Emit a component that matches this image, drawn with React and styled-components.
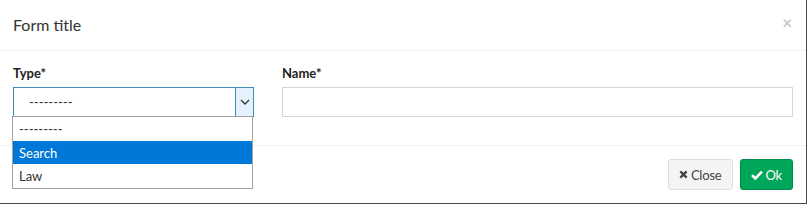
import React from "react";
import styled, { createGlobalStyle } from "styled-components";

const Global = createGlobalStyle`
  html, body { margin: 0; padding: 0; background: #4a4a4a; }
  body { font-family: Lato, "Noto Sans", sans-serif; color: #333; }
  * { box-sizing: border-box; }
`;

const Frame = styled.div`
  width: 807px;
  height: 204px;
  background: #4a4a4a;
  overflow: hidden;
`;

const Modal = styled.div`
  width: 806px;
  height: 203px;
  background: #fff;
  display: flex;
  flex-direction: column;
`;

const Header = styled.div`
  height: 51px;
  border-bottom: 1px solid #f0f0f0;
  display: flex;
  align-items: center;
  justify-content: space-between;
  padding: 0 14px 2px 13px;
`;

const Title = styled.h4`
  margin: 0;
  font-size: 16px;
  font-weight: 400;
  color: #333;
`;

const CloseX = styled.span`
  font-size: 17px;
  font-weight: 700;
  color: #c8c8c8;
  line-height: 1;
  margin-top: -4px;
`;

const Body = styled.div`
  height: 95px;
  border-bottom: 1px solid #f0f0f0;
  display: grid;
  grid-template-columns: 241px 511px;
  column-gap: 28px;
  padding: 16px 13px 0 13px;
`;

const Field = styled.div`
  position: relative;
  display: flex;
  flex-direction: column;
`;

const Label = styled.label`
  font-size: 13px;
  font-weight: 700;
  color: #222;
  height: 20px;
  line-height: 13px;
`;

const SelectBox = styled.div`
  height: 30px;
  border: 1px solid #3c8dbc;
  display: flex;
  align-items: stretch;
`;

const SelectText = styled.span`
  flex: 1;
  padding-left: 15px;
  font-size: 13px;
  line-height: 28px;
  color: #333;
`;

const Arrow = styled.span`
  width: 18px;
  background: #e5f1fb;
  border-left: 1px solid #3c8dbc;
  display: flex;
  align-items: center;
  justify-content: center;
`;

const Dropdown = styled.ul`
  position: absolute;
  top: 49px;
  left: -1px;
  width: 241px;
  margin: 0;
  padding: 0;
  list-style: none;
  background: #fff;
  border: 1px solid #a0a0a0;
  z-index: 2;
`;

const Option = styled.li`
  height: 23.5px;
  padding-left: 6px;
  font-size: 13px;
  line-height: 24px;
  color: ${p => (p.$active ? "#fff" : "#333")};
  background: ${p => (p.$active ? "#0078d7" : "transparent")};
`;

const Input = styled.div`
  height: 30px;
  border: 1px solid #d2d6de;
`;

const Footer = styled.div`
  flex: 1;
  display: flex;
  justify-content: flex-end;
  align-items: flex-start;
  gap: 7px;
  padding: 13px 13px 0 0;
`;

const Button = styled.button`
  height: 31px;
  padding: 0 10px;
  border: 1px solid ${p => (p.$primary ? "#008d4c" : "#ddd")};
  border-radius: 3px;
  background: ${p => (p.$primary ? "#00a65a" : "#f4f4f4")};
  color: ${p => (p.$primary ? "#fff" : "#444")};
  font-family: Lato, "Noto Sans", sans-serif;
  font-size: 13px;
  letter-spacing: -0.2px;
  display: flex;
  align-items: center;
  gap: 3px;
`;

const Chevron = () => (
  <svg width="10" height="6" viewBox="0 0 10 6">
    <path d="M1 1l4 4 4-4" fill="none" stroke="#333" strokeWidth="1.3" />
  </svg>
);

const TimesIcon = () => (
  <svg width="9" height="9" viewBox="0 0 10 10">
    <path d="M1.5 1.5l7 7M8.5 1.5l-7 7" stroke="#444" strokeWidth="2.6" strokeLinecap="butt" />
  </svg>
);

const CheckIcon = () => (
  <svg width="12" height="10" viewBox="0 0 12 10">
    <path d="M1 5.2l3.3 3.3L11 1.6" fill="none" stroke="#fff" strokeWidth="2.6" />
  </svg>
);

export default function App() {
  return (
    <Frame>
      <Global />
      <Modal>
        <Header>
          <Title>Form title</Title>
          <CloseX>×</CloseX>
        </Header>
        <Body>
          <Field>
            <Label>Type*</Label>
            <SelectBox>
              <SelectText>---------</SelectText>
              <Arrow><Chevron /></Arrow>
            </SelectBox>
            <Dropdown>
              <Option>---------</Option>
              <Option $active>Search</Option>
              <Option>Law</Option>
            </Dropdown>
          </Field>
          <Field>
            <Label>Name*</Label>
            <Input />
          </Field>
        </Body>
        <Footer>
          <Button><TimesIcon />Close</Button>
          <Button $primary><CheckIcon />Ok</Button>
        </Footer>
      </Modal>
    </Frame>
  );
}
